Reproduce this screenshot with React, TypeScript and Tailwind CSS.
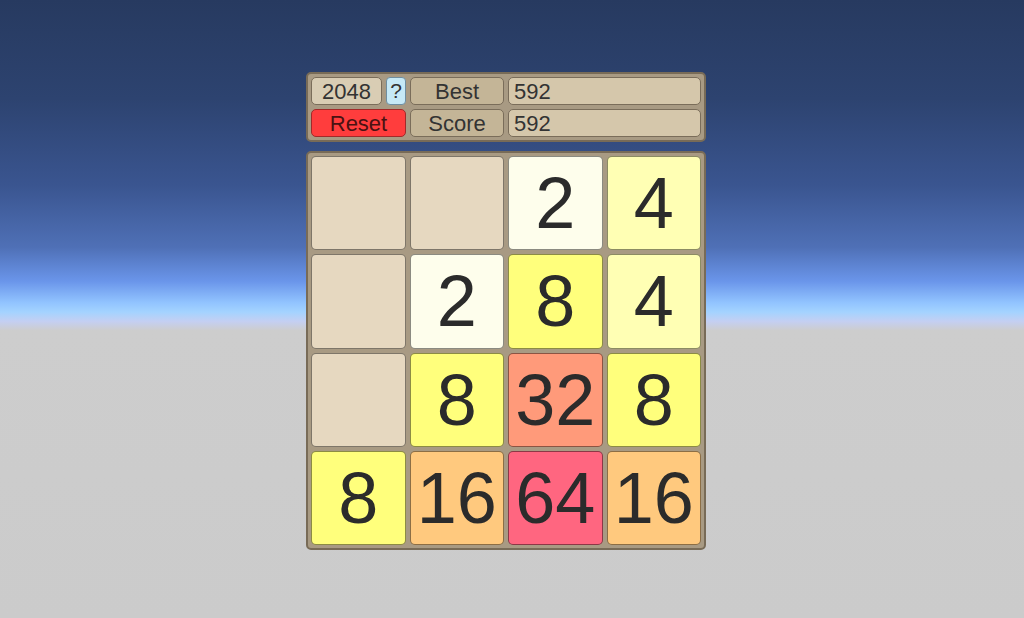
const board: number[][] = [
  [0, 0, 2, 4],
  [0, 2, 8, 4],
  [0, 8, 32, 8],
  [8, 16, 64, 16],
];

const tileColors: Record<number, string> = {
  0: 'bg-[#e6d8c0]',
  2: 'bg-[#fefeec]',
  4: 'bg-[#ffffb4]',
  8: 'bg-[#ffff7c]',
  16: 'bg-[#ffc97e]',
  32: 'bg-[#ff9a7a]',
  64: 'bg-[#ff6680]',
};

function Tile({ value }: { value: number }) {
  return (
    <div
      className={`flex items-center justify-center rounded-[5px] border-[1.5px] border-black/45 ${tileColors[value]}`}
    >
      {value > 0 && (
        <span className="text-[72px] leading-none text-[#2b2b2b]">{value}</span>
      )}
    </div>
  );
}

export default function App() {
  const best = 592;
  const score = 592;

  return (
    <div
      className="h-[618px] w-full overflow-hidden bg-[linear-gradient(to_bottom,#273a60_0%,#2d4370_16%,#3a5590_30%,#4f70b6_40%,#6a95ea_45.5%,#92c4ff_49%,#a4d3ff_50.5%,#c4cff2_52%,#cdcdcd_53.5%,#cbcbcb_100%)] pl-[306px] pt-[72px]"
      style={{ fontFamily: '"Liberation Sans", Arial, sans-serif' }}
    >
      <div className="flex w-[400px] flex-col gap-[9px]">
        {/* score bar */}
        <div className="grid h-[70px] grid-cols-[71px_20px_94px_1fr] grid-rows-2 gap-[4px] rounded-[5px] border-2 border-[#786b57] bg-[#a89a83] p-[3px] text-[22px] text-[#333333]">
          <div className="flex items-center justify-center rounded-[5px] border-[1.5px] border-[#7a6d5a] bg-[#d9cdb4]">
            2048
          </div>
          <div className="flex items-center justify-center rounded-[4px] border-[1.5px] border-[#6f8ea0] bg-[#c6e9f6] text-[21px]">
            ?
          </div>
          <div className="flex items-center justify-center rounded-[5px] border-[1.5px] border-[#7a6d5a] bg-[#c4b597]">
            Best
          </div>
          <div className="flex items-center rounded-[5px] border-[1.5px] border-[#7a6d5a] bg-[#d5c7ab] pl-[5px]">
            {best}
          </div>
          <button className="col-span-2 flex items-center justify-center rounded-[5px] border-[1.5px] border-[#a22a2a] bg-[#ff3d3d] text-[#4a1212]">
            Reset
          </button>
          <div className="flex items-center justify-center rounded-[5px] border-[1.5px] border-[#7a6d5a] bg-[#c4b597]">
            Score
          </div>
          <div className="flex items-center rounded-[5px] border-[1.5px] border-[#7a6d5a] bg-[#d5c7ab] pl-[5px]">
            {score}
          </div>
        </div>

        {/* board */}
        <div className="grid h-[399px] grid-cols-4 grid-rows-4 gap-[4px] rounded-[5px] border-2 border-[#786b57] bg-[#a89a83] p-[3px]">
          {board.flatMap((row, r) =>
            row.map((value, c) => <Tile key={`${r}-${c}`} value={value} />)
          )}
        </div>
      </div>
    </div>
  );
}
